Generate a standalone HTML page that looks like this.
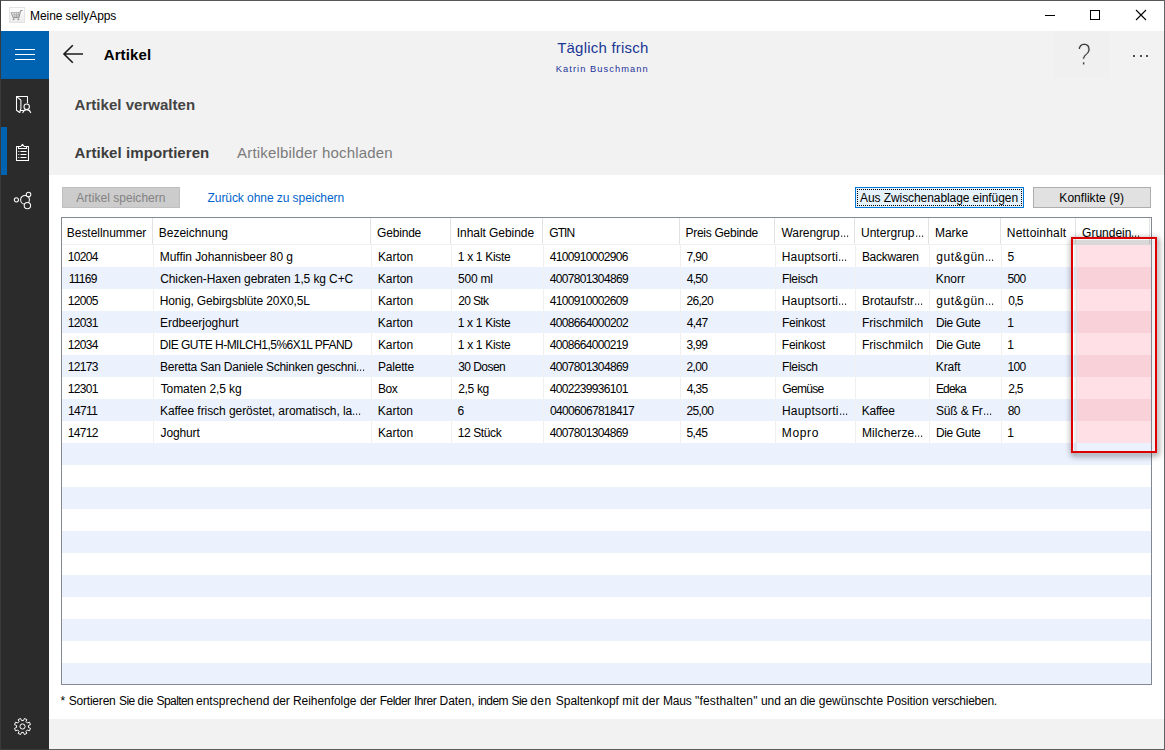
<!DOCTYPE html>
<html lang="de"><head><meta charset="utf-8"><title>Meine sellyApps</title>
<style>
html,body{margin:0;padding:0}
body{width:1165px;height:750px;overflow:hidden;position:relative;background:#fff;font-family:"Liberation Sans",sans-serif;font-size:12px;color:#000}
.a{position:absolute;white-space:nowrap}
.win{left:0;top:0;width:1163px;height:748px;border-style:solid;border-width:1px;border-color:#585858 #626262 #5e5e5e #3a3a3a;box-sizing:content-box}
.tbar{left:1px;top:1px;width:1163px;height:30px;background:#fff}
.side{left:1px;top:31px;width:48px;height:718px;background:#2b2b2b}
.ham{left:1px;top:31px;width:48px;height:48px;background:#0063b1}
.hl{left:15px;width:20px;height:1px;background:#fff}
.sel{left:1px;top:127px;width:6px;height:48px;background:#0063b1}
.head{left:49px;top:31px;width:1115px;height:144px;background:#f2f2f2}
.foot{left:49px;top:719px;width:1115px;height:30px;background:#f2f2f2}
.t15b{font-size:15px;font-weight:bold;line-height:20px}
.grid{left:61px;top:217px;width:1089px;height:466px;border:1px solid #828790;background:#fff}
.stripe{left:62px;width:1089px;height:22px;background:#ebf1fd}
.hs{top:218px;width:1px;height:26px;background:#e2e2e2}
.rs{top:245px;width:1px;height:198px;background:#f0f0f0}
.hc{top:220px;height:26px;line-height:26px}
.c{height:22px;line-height:24px}
.pink{left:1077px;width:74px;height:22px}
.dot{top:55.4px;width:2px;height:2px;border-radius:50%;background:#1a1a1a}
.el{display:inline-block;transform:scaleX(.78);transform-origin:0 50%;letter-spacing:0}
.btn{box-sizing:border-box;height:21px;line-height:21px;text-align:center}
</style></head><body>
<div class="a win"></div>
<div class="a tbar"></div>
<div class="a" style="left:0;top:749px;width:49px;height:1px;background:#3a3a3a"></div>
<div class="a side"></div>
<div class="a ham"></div>
<div class="a hl" style="top:49px"></div><div class="a hl" style="top:54px"></div><div class="a hl" style="top:59px"></div>
<div class="a sel"></div>
<div class="a head"></div>
<div class="a foot"></div>
<div class="a" style="left:9px;top:7px;width:14px;height:14px;border:1px solid #e3e3e3;background:linear-gradient(#fdfdfd,#ececec)"></div>
<svg class="a" style="left:9px;top:7px" width="16" height="16" viewBox="0 0 16 16"><g fill="none" stroke="#8d8d8d" stroke-width="1"><path d="M2.2 5.2 L4 10.6 H10 L11.6 3.6 H13.6"/><path d="M3 5.5h8M3.6 7.3h7M4.2 9h6" stroke="#aaa" stroke-width=".8"/><path d="M5.2 5.3l.9 5M7.4 5.3l.2 5M9.6 5.3l-.6 5" stroke="#a5a5a5" stroke-width=".8"/></g><circle cx="4.6" cy="12.3" r="1" fill="#9a9a9a"/><circle cx="9.4" cy="12.3" r="1" fill="#9a9a9a"/></svg>
<div class="a" id="t_title" style="left:30px;top:8px;font-size:12px;line-height:16px;letter-spacing:-0.075px;margin-left:0.03px">Meine sellyApps</div>
<div class="a" style="left:1045px;top:15px;width:10px;height:1px;background:#000"></div>
<div class="a" style="left:1090px;top:10px;width:8px;height:8px;border:1px solid #000"></div>
<svg class="a" style="left:1135px;top:9px" width="12" height="12" viewBox="0 0 12 12"><path d="M1 1L11 11M11 1L1 11" stroke="#000" stroke-width="1.1" fill="none"/></svg>
<svg class="a" style="left:13px;top:93px" width="22" height="22" viewBox="0 0 22 22"><g fill="none" stroke="#fff" stroke-width="1.05" stroke-linejoin="round" stroke-linecap="round"><path d="M14.5 9.8V3.5H3.5V17.3L6.7 19.5"/><path d="M3.5 3.5L7.9 7.2V15.6L6.7 19.5"/><path d="M7.2 17.5H10.4"/><circle cx="13.7" cy="13.7" r="2.7"/><path d="M9.8 19.6C10.4 17.6 11.9 16.6 13.7 16.6C15.5 16.6 17 17.6 17.7 19.6"/></g></svg>
<svg class="a" style="left:13px;top:141px" width="22" height="22" viewBox="0 0 22 22"><g fill="none" stroke="#fff" stroke-width="1.05" stroke-linejoin="round"><path d="M6 5.5H3.5V19.5H15.5V5.5H13"/><path d="M5.5 7.5V5.5H7.8L9.5 3.4L11.2 5.5H13.5V7.5Z"/><path d="M7.5 10.5H13.5M7.5 13.5H13.5M7.5 16.5H13.5" stroke-width="1.2"/><path d="M5.3 10.5H6.3M5.3 13.5H6.3M5.3 16.5H6.3" stroke-width="1.2"/></g></svg>
<svg class="a" style="left:12px;top:188px" width="24" height="24" viewBox="0 0 24 24"><g fill="#2b2b2b" stroke="#fff" stroke-width="1.05"><circle cx="13" cy="11.8" r="4.4"/><circle cx="4.4" cy="11.8" r="2.1"/><circle cx="16.5" cy="6.5" r="2.3"/><circle cx="15.4" cy="17.6" r="3.2"/></g></svg>
<svg class="a" style="left:11px;top:715px" width="24" height="24" viewBox="0 0 24 24"><g fill="none" stroke="#fff" stroke-width="1" stroke-linejoin="round"><path d="M13.35 3.51L15.84 4.54L14.99 6.62L16.38 8.01L18.46 7.16L19.49 9.65L17.42 10.51L17.42 12.49L19.49 13.35L18.46 15.84L16.38 14.99L14.99 16.38L15.84 18.46L13.35 19.49L12.49 17.42L10.51 17.42L9.65 19.49L7.16 18.46L8.01 16.38L6.62 14.99L4.54 15.84L3.51 13.35L5.58 12.49L5.58 10.51L3.51 9.65L4.54 7.16L6.62 8.01L8.01 6.62L7.16 4.54L9.65 3.51L10.51 5.58L12.49 5.58Z"/><circle cx="11.5" cy="11.5" r="2.6"/></g></svg>
<svg class="a" style="left:60px;top:42px" width="26" height="24" viewBox="0 0 26 24"><path d="M23 12H4M12.8 3.2L4 12L12.8 20.8" fill="none" stroke="#1c1c1c" stroke-width="1.6"/></svg>
<div class="a t15b" id="t_art" style="left:103.5px;top:45px;color:#000;letter-spacing:0.133px;margin-left:0.18px">Artikel</div>
<div class="a t15b" id="t_verw" style="left:74.5px;top:95px;color:#444;letter-spacing:0.033px;margin-left:0.06px">Artikel verwalten</div>
<div class="a t15b" id="t_imp" style="left:74.5px;top:143px;color:#3d3d3d;letter-spacing:0.074px;margin-left:0.09px">Artikel importieren</div>
<div class="a" id="t_bild" style="left:236.5px;top:143px;font-size:15px;line-height:20px;color:#7b7b7b;letter-spacing:0.175px;margin-left:0.55px">Artikelbilder hochladen</div>
<div class="a" id="t_tag" style="left:556px;top:37.6px;font-size:15px;line-height:20px;color:#1a3795;letter-spacing:0.212px;margin-left:1.20px">Täglich frisch</div>
<div class="a" id="t_kat" style="left:556px;top:62px;font-size:9.3px;line-height:14px;color:#24339a;letter-spacing:1.052px;margin-left:-0.20px">Katrin Buschmann</div>
<div class="a" style="left:1054px;top:31px;width:55px;height:48px;background:#f0f0f0"></div>
<div class="a" id="t_q" style="left:1053.5px;top:38px;width:60px;text-align:center;font-size:30.5px;line-height:32px;color:#3c3c3c;-webkit-text-stroke:0.95px #f0f0f0;transform:scaleX(.83)">?</div>
<div class="a dot" style="left:1133.1px"></div><div class="a dot" style="left:1139.5px"></div><div class="a dot" style="left:1146px"></div>
<div class="a btn" id="b_save" style="left:62px;top:187px;width:118px;background:#ccc;border:1px solid #bfbfbf;color:#838383"><span id="s_save" style="letter-spacing:0.036px;margin-left:-0.16px">Artikel speichern</span></div>
<div class="a" id="t_zur" style="left:207.5px;top:190px;line-height:16px;color:#0066cc;letter-spacing:-0.062px;margin-left:-0.00px">Zurück ohne zu speichern</div>
<div class="a btn" id="b_aus" style="left:855px;top:187px;width:169px;background:#e5f1fb;border:1px solid #0078d7"><span id="s_aus" style="letter-spacing:-0.082px;margin-left:-0.95px">Aus Zwischenablage einfügen</span></div>
<div class="a" style="left:857px;top:189px;width:163px;height:15px;border:1px dotted #000"></div>
<div class="a btn" id="b_konf" style="left:1033px;top:187px;width:118px;background:#e1e1e1;border:1px solid #adadad"><span id="s_konf" style="letter-spacing:0.044px;margin-left:-0.73px">Konflikte (9)</span></div>
<div class="a grid"></div>
<div class="a stripe" style="top:267px;height:22px"></div>
<div class="a stripe" style="top:311px;height:22px"></div>
<div class="a stripe" style="top:355px;height:22px"></div>
<div class="a stripe" style="top:399px;height:22px"></div>
<div class="a stripe" style="top:443px;height:22px"></div>
<div class="a stripe" style="top:487px;height:22px"></div>
<div class="a stripe" style="top:531px;height:22px"></div>
<div class="a stripe" style="top:575px;height:22px"></div>
<div class="a stripe" style="top:619px;height:22px"></div>
<div class="a stripe" style="top:663px;height:21px"></div>
<div class="a" style="left:62px;top:244px;width:1089px;height:1px;background:#f0f0f0"></div>
<div class="a hs" style="left:152px"></div><div class="a rs" style="left:153px"></div>
<div class="a hs" style="left:370px"></div><div class="a rs" style="left:371px"></div>
<div class="a hs" style="left:450px"></div><div class="a rs" style="left:451px"></div>
<div class="a hs" style="left:542px"></div><div class="a rs" style="left:543px"></div>
<div class="a hs" style="left:679px"></div><div class="a rs" style="left:680px"></div>
<div class="a hs" style="left:774px"></div><div class="a rs" style="left:775px"></div>
<div class="a hs" style="left:854px"></div><div class="a rs" style="left:855px"></div>
<div class="a hs" style="left:928px"></div><div class="a rs" style="left:929px"></div>
<div class="a hs" style="left:1000px"></div><div class="a rs" style="left:1001px"></div>
<div class="a hs" style="left:1075px"></div><div class="a rs" style="left:1076px"></div>
<div class="a hs" style="left:1149px"></div>
<div class="a hc" id="h0" style="left:66.5px;letter-spacing:-0.042px;margin-left:0.32px">Bestellnummer</div>
<div class="a hc" id="h1" style="left:158.5px;letter-spacing:-0.020px;margin-left:0.32px">Bezeichnung</div>
<div class="a hc" id="h2" style="left:376.5px;letter-spacing:-0.201px;margin-left:0.61px">Gebinde</div>
<div class="a hc" id="h3" style="left:456.5px;letter-spacing:-0.052px;margin-left:0.26px">Inhalt Gebinde</div>
<div class="a hc" id="h4" style="left:548.5px;letter-spacing:-0.900px;margin-left:0.75px">GTIN</div>
<div class="a hc" id="h5" style="left:685.5px;letter-spacing:-0.273px;margin-left:0.00px">Preis Gebinde</div>
<div class="a hc" id="h6" style="left:780.5px;letter-spacing:-0.083px;margin-left:1.00px">Warengrup<span class="el">…</span></div>
<div class="a hc" id="h7" style="left:860.5px;letter-spacing:0.026px;margin-left:0.46px">Untergrup<span class="el">…</span></div>
<div class="a hc" id="h8" style="left:934.5px;letter-spacing:0.004px;margin-left:0.38px">Marke</div>
<div class="a hc" id="h9" style="left:1006.5px;letter-spacing:0.202px;margin-left:0.32px">Nettoinhalt</div>
<div class="a hc" id="h10" style="left:1081.5px;letter-spacing:-0.004px;margin-left:0.61px">Grundein<span class="el">…</span></div>
<div class="a" id="redshadow" style="left:1051px;top:217px;width:126px;height:256px;clip-path:polygon(evenodd,0 0,126px 0,126px 256px,0 256px,0 0,22px 22px,22px 236px,104px 236px,104px 22px,22px 22px)"><div class="a" style="left:20px;top:20px;width:82px;height:212px;border:2px solid #000;filter:drop-shadow(1.8px 2.8px 3px rgba(0,0,0,.85))"></div></div>
<div class="a" id="band_t" style="left:1073px;top:239px;width:78px;height:6px;background:linear-gradient(to bottom,rgba(0,0,0,.03) 0,rgba(0,0,0,.03) 1px,rgba(0,0,0,.15) 1px,rgba(0,0,0,.15) 5px,rgba(0,0,0,.10) 5px)"></div>
<div class="a" id="band_tr" style="left:1152px;top:240px;width:3px;height:5px;background:rgba(0,0,0,.06)"></div>
<div class="a" id="band_l" style="left:1074px;top:245px;width:3px;height:206px;background:rgba(0,0,0,.06)"></div>
<div class="a" id="band_r" style="left:1152px;top:245px;width:3px;height:206px;background:rgba(0,0,0,.05)"></div>
<div class="a c" id="r0c0" style="left:67.5px;top:245px;letter-spacing:-0.670px;margin-left:0.17px">10204</div>
<div class="a c" id="r0c1" style="left:159.5px;top:245px;letter-spacing:-0.061px;margin-left:0.32px">Muffin Johannisbeer 80 g</div>
<div class="a c" id="r0c2" style="left:377.5px;top:245px;letter-spacing:-0.021px;margin-left:0.38px">Karton</div>
<div class="a c" id="r0c3" style="left:457.5px;top:245px;letter-spacing:-0.321px;margin-left:0.32px">1 x 1 Kiste</div>
<div class="a c" id="r0c4" style="left:549.5px;top:245px;letter-spacing:-0.670px;margin-left:0.30px">4100910002906</div>
<div class="a c" id="r0c5" style="left:686.5px;top:245px;letter-spacing:-0.670px;margin-left:0.05px">7,90</div>
<div class="a c" id="r0c6" style="left:781.5px;top:245px;letter-spacing:0.145px;margin-left:0.32px">Hauptsorti<span class="el">…</span></div>
<div class="a c" id="r0c7" style="left:861.5px;top:245px;letter-spacing:-0.288px;margin-left:0.38px">Backwaren</div>
<div class="a c" id="r0c8" style="left:935.5px;top:245px;letter-spacing:0.551px;margin-left:0.79px">gut&amp;gün<span class="el">…</span></div>
<div class="a c" id="r0c9" style="left:1007.5px;top:245px;letter-spacing:-0.670px;margin-left:0.00px">5</div>
<div class="a pink" style="top:245px;background:#ffe0e6"></div>
<div class="a c" id="r1c0" style="left:67.5px;top:267px;letter-spacing:-0.670px;margin-left:1.13px">11169</div>
<div class="a c" id="r1c1" style="left:159.5px;top:267px;letter-spacing:-0.109px;margin-left:0.75px">Chicken-Haxen gebraten 1,5 kg C+C</div>
<div class="a c" id="r1c2" style="left:377.5px;top:267px;letter-spacing:-0.046px;margin-left:0.35px">Karton</div>
<div class="a c" id="r1c3" style="left:457.5px;top:267px;letter-spacing:-0.193px;margin-left:0.48px">500 ml</div>
<div class="a c" id="r1c4" style="left:549.5px;top:267px;letter-spacing:-0.670px;margin-left:0.35px">4007801304869</div>
<div class="a c" id="r1c5" style="left:686.5px;top:267px;letter-spacing:-0.670px;margin-left:0.21px">4,50</div>
<div class="a c" id="r1c6" style="left:781.5px;top:267px;letter-spacing:-0.340px;margin-left:0.50px">Fleisch</div>
<div class="a c" id="r1c8" style="left:935.5px;top:267px;letter-spacing:-0.075px;margin-left:0.35px">Knorr</div>
<div class="a c" id="r1c9" style="left:1007.5px;top:267px;letter-spacing:-0.670px;margin-left:0.00px">500</div>
<div class="a pink" style="top:267px;background:#f8d1d9"></div>
<div class="a c" id="r2c0" style="left:67.5px;top:289px;letter-spacing:-0.670px;margin-left:0.18px">12005</div>
<div class="a c" id="r2c1" style="left:159.5px;top:289px;letter-spacing:-0.152px;margin-left:0.32px">Honig, Gebirgsblüte 20X0,5L</div>
<div class="a c" id="r2c2" style="left:377.5px;top:289px;letter-spacing:-0.021px;margin-left:0.38px">Karton</div>
<div class="a c" id="r2c3" style="left:457.5px;top:289px;letter-spacing:-0.660px;margin-left:0.77px">20 Stk</div>
<div class="a c" id="r2c4" style="left:549.5px;top:289px;letter-spacing:-0.670px;margin-left:0.30px">4100910002609</div>
<div class="a c" id="r2c5" style="left:686.5px;top:289px;letter-spacing:-0.670px;margin-left:-0.13px">26,20</div>
<div class="a c" id="r2c6" style="left:781.5px;top:289px;letter-spacing:0.145px;margin-left:0.32px">Hauptsorti<span class="el">…</span></div>
<div class="a c" id="r2c7" style="left:861.5px;top:289px;letter-spacing:0.010px;margin-left:0.38px">Brotaufstr<span class="el">…</span></div>
<div class="a c" id="r2c8" style="left:935.5px;top:289px;letter-spacing:0.551px;margin-left:0.79px">gut&amp;gün<span class="el">…</span></div>
<div class="a c" id="r2c9" style="left:1007.5px;top:289px;letter-spacing:-0.670px;margin-left:0.67px">0,5</div>
<div class="a pink" style="top:289px;background:#ffe0e6"></div>
<div class="a c" id="r3c0" style="left:67.5px;top:311px;letter-spacing:-0.670px;margin-left:0.18px">12031</div>
<div class="a c" id="r3c1" style="left:159.5px;top:311px;letter-spacing:-0.057px;margin-left:0.50px">Erdbeerjoghurt</div>
<div class="a c" id="r3c2" style="left:377.5px;top:311px;letter-spacing:-0.046px;margin-left:0.35px">Karton</div>
<div class="a c" id="r3c3" style="left:457.5px;top:311px;letter-spacing:-0.303px;margin-left:0.23px">1 x 1 Kiste</div>
<div class="a c" id="r3c4" style="left:549.5px;top:311px;letter-spacing:-0.670px;margin-left:0.35px">4008664000202</div>
<div class="a c" id="r3c5" style="left:686.5px;top:311px;letter-spacing:-0.670px;margin-left:0.27px">4,47</div>
<div class="a c" id="r3c6" style="left:781.5px;top:311px;letter-spacing:-0.281px;margin-left:0.50px">Feinkost</div>
<div class="a c" id="r3c7" style="left:861.5px;top:311px;letter-spacing:0.056px;margin-left:0.38px">Frischmilch</div>
<div class="a c" id="r3c8" style="left:935.5px;top:311px;letter-spacing:-0.361px;margin-left:0.38px">Die Gute</div>
<div class="a c" id="r3c9" style="left:1007.5px;top:311px;letter-spacing:-0.670px;margin-left:-0.29px">1</div>
<div class="a pink" style="top:311px;background:#f8d1d9"></div>
<div class="a c" id="r4c0" style="left:67.5px;top:333px;letter-spacing:-0.670px;margin-left:0.17px">12034</div>
<div class="a c" id="r4c1" style="left:159.5px;top:333px;letter-spacing:-0.531px;margin-left:0.32px">DIE GUTE H-MILCH1,5%6X1L PFAND</div>
<div class="a c" id="r4c2" style="left:377.5px;top:333px;letter-spacing:-0.021px;margin-left:0.38px">Karton</div>
<div class="a c" id="r4c3" style="left:457.5px;top:333px;letter-spacing:-0.321px;margin-left:0.32px">1 x 1 Kiste</div>
<div class="a c" id="r4c4" style="left:549.5px;top:333px;letter-spacing:-0.670px;margin-left:0.30px">4008664000219</div>
<div class="a c" id="r4c5" style="left:686.5px;top:333px;letter-spacing:-0.670px;margin-left:0.12px">3,99</div>
<div class="a c" id="r4c6" style="left:781.5px;top:333px;letter-spacing:-0.258px;margin-left:0.32px">Feinkost</div>
<div class="a c" id="r4c7" style="left:861.5px;top:333px;letter-spacing:0.054px;margin-left:0.38px">Frischmilch</div>
<div class="a c" id="r4c8" style="left:935.5px;top:333px;letter-spacing:-0.349px;margin-left:0.38px">Die Gute</div>
<div class="a c" id="r4c9" style="left:1007.5px;top:333px;letter-spacing:-0.670px;margin-left:-0.38px">1</div>
<div class="a pink" style="top:333px;background:#ffe0e6"></div>
<div class="a c" id="r5c0" style="left:67.5px;top:355px;letter-spacing:-0.670px;margin-left:0.18px">12173</div>
<div class="a c" id="r5c1" style="left:159.5px;top:355px;letter-spacing:-0.241px;margin-left:0.50px">Beretta San Daniele Schinken geschni<span class="el">…</span></div>
<div class="a c" id="r5c2" style="left:377.5px;top:355px;letter-spacing:-0.175px;margin-left:0.38px">Palette</div>
<div class="a c" id="r5c3" style="left:457.5px;top:355px;letter-spacing:-0.548px;margin-left:0.70px">30 Dosen</div>
<div class="a c" id="r5c4" style="left:549.5px;top:355px;letter-spacing:-0.670px;margin-left:0.35px">4007801304869</div>
<div class="a c" id="r5c5" style="left:686.5px;top:355px;letter-spacing:-0.670px;margin-left:0.00px">2,00</div>
<div class="a c" id="r5c6" style="left:781.5px;top:355px;letter-spacing:-0.340px;margin-left:0.50px">Fleisch</div>
<div class="a c" id="r5c8" style="left:935.5px;top:355px;letter-spacing:-0.135px;margin-left:0.35px">Kraft</div>
<div class="a c" id="r5c9" style="left:1007.5px;top:355px;letter-spacing:-0.670px;margin-left:0.00px">100</div>
<div class="a pink" style="top:355px;background:#f8d1d9"></div>
<div class="a c" id="r6c0" style="left:67.5px;top:377px;letter-spacing:-0.670px;margin-left:0.18px">12301</div>
<div class="a c" id="r6c1" style="left:159.5px;top:377px;letter-spacing:-0.079px;margin-left:1.16px">Tomaten 2,5 kg</div>
<div class="a c" id="r6c2" style="left:377.5px;top:377px;letter-spacing:-0.450px;margin-left:0.38px">Box</div>
<div class="a c" id="r6c3" style="left:457.5px;top:377px;letter-spacing:-0.336px;margin-left:0.77px">2,5 kg</div>
<div class="a c" id="r6c4" style="left:549.5px;top:377px;letter-spacing:-0.670px;margin-left:0.29px">4002239936101</div>
<div class="a c" id="r6c5" style="left:686.5px;top:377px;letter-spacing:-0.670px;margin-left:0.23px">4,35</div>
<div class="a c" id="r6c6" style="left:781.5px;top:377px;letter-spacing:-0.667px;margin-left:0.75px">Gemüse</div>
<div class="a c" id="r6c8" style="left:935.5px;top:377px;letter-spacing:-0.808px;margin-left:0.38px">Edeka</div>
<div class="a c" id="r6c9" style="left:1007.5px;top:377px;letter-spacing:-0.670px;margin-left:0.63px">2,5</div>
<div class="a pink" style="top:377px;background:#ffe0e6"></div>
<div class="a c" id="r7c0" style="left:67.5px;top:399px;letter-spacing:-0.670px;margin-left:0.59px">14711</div>
<div class="a c" id="r7c1" style="left:159.5px;top:399px;letter-spacing:-0.060px;margin-left:0.47px">Kaffee frisch geröstet, aromatisch, la<span class="el">…</span></div>
<div class="a c" id="r7c2" style="left:377.5px;top:399px;letter-spacing:-0.046px;margin-left:0.35px">Karton</div>
<div class="a c" id="r7c3" style="left:457.5px;top:399px;letter-spacing:-0.670px;margin-left:0.06px">6</div>
<div class="a c" id="r7c4" style="left:549.5px;top:399px;letter-spacing:-0.670px;margin-left:0.39px">04006067818417</div>
<div class="a c" id="r7c5" style="left:686.5px;top:399px;letter-spacing:-0.670px;margin-left:-0.02px">25,00</div>
<div class="a c" id="r7c6" style="left:781.5px;top:399px;letter-spacing:0.188px;margin-left:0.50px">Hauptsorti<span class="el">…</span></div>
<div class="a c" id="r7c7" style="left:861.5px;top:399px;letter-spacing:-0.282px;margin-left:0.35px">Kaffee</div>
<div class="a c" id="r7c8" style="left:935.5px;top:399px;letter-spacing:-0.172px;margin-left:0.51px">Süß &amp; Fr<span class="el">…</span></div>
<div class="a c" id="r7c9" style="left:1007.5px;top:399px;letter-spacing:-0.670px;margin-left:0.24px">80</div>
<div class="a pink" style="top:399px;background:#f8d1d9"></div>
<div class="a c" id="r8c0" style="left:67.5px;top:421px;letter-spacing:-0.670px;margin-left:0.18px">14712</div>
<div class="a c" id="r8c1" style="left:159.5px;top:421px;letter-spacing:-0.124px;margin-left:1.04px">Joghurt</div>
<div class="a c" id="r8c2" style="left:377.5px;top:421px;letter-spacing:-0.021px;margin-left:0.38px">Karton</div>
<div class="a c" id="r8c3" style="left:457.5px;top:421px;letter-spacing:-0.408px;margin-left:0.32px">12 Stück</div>
<div class="a c" id="r8c4" style="left:549.5px;top:421px;letter-spacing:-0.670px;margin-left:0.30px">4007801304869</div>
<div class="a c" id="r8c5" style="left:686.5px;top:421px;letter-spacing:-0.670px;margin-left:0.02px">5,45</div>
<div class="a c" id="r8c6" style="left:781.5px;top:421px;letter-spacing:0.644px;margin-left:0.32px">Mopro</div>
<div class="a c" id="r8c7" style="left:861.5px;top:421px;letter-spacing:0.126px;margin-left:0.38px">Milcherze<span class="el">…</span></div>
<div class="a c" id="r8c8" style="left:935.5px;top:421px;letter-spacing:-0.349px;margin-left:0.38px">Die Gute</div>
<div class="a c" id="r8c9" style="left:1007.5px;top:421px;letter-spacing:-0.670px;margin-left:-0.38px">1</div>
<div class="a pink" style="top:421px;background:#ffe0e6"></div>
<div class="a" id="t_foot" style="left:0;top:693px;line-height:16px;width:1100px;height:16px"><span class="a fw" style="left:60.4px;letter-spacing:0.230px">*</span> <span class="a fw" style="left:68.7px;letter-spacing:-0.199px">Sortieren</span> <span class="a fw" style="left:119.0px;letter-spacing:-0.600px">Sie</span> <span class="a fw" style="left:137.6px;letter-spacing:-0.137px">die</span> <span class="a fw" style="left:156.6px;letter-spacing:-0.600px">Spalten</span> <span class="a fw" style="left:195.9px;letter-spacing:0.065px">entsprechend</span> <span class="a fw" style="left:272.8px;letter-spacing:-0.215px">der</span> <span class="a fw" style="left:292.9px;letter-spacing:-0.040px">Reihenfolge</span> <span class="a fw" style="left:359.9px;letter-spacing:-0.315px">der</span> <span class="a fw" style="left:379.7px;letter-spacing:-0.519px">Felder</span> <span class="a fw" style="left:414.0px;letter-spacing:-0.495px">Ihrer</span> <span class="a fw" style="left:439.6px;letter-spacing:-0.059px">Daten,</span> <span class="a fw" style="left:478.0px;letter-spacing:-0.517px">indem</span> <span class="a fw" style="left:511.5px;letter-spacing:-0.600px">Sie</span> <span class="a fw" style="left:530.2px;letter-spacing:0.500px">den</span> <span class="a fw" style="left:555.8px;letter-spacing:-0.025px">Spaltenkopf</span> <span class="a fw" style="left:622.3px;letter-spacing:0.101px">mit</span> <span class="a fw" style="left:642.0px;letter-spacing:0.052px">der</span> <span class="a fw" style="left:662.9px;letter-spacing:-0.136px">Maus</span> <span class="a fw" style="left:695.1px;letter-spacing:0.162px">"festhalten"</span> <span class="a fw" style="left:761.0px;letter-spacing:-0.107px">und</span> <span class="a fw" style="left:784.1px;letter-spacing:-0.423px">an</span> <span class="a fw" style="left:800.0px;letter-spacing:-0.238px">die</span> <span class="a fw" style="left:818.7px;letter-spacing:0.036px">gewünschte</span> <span class="a fw" style="left:886.5px;letter-spacing:-0.086px">Position</span> <span class="a fw" style="left:931.9px;letter-spacing:-0.253px">verschieben.</span></div>
<div class="a" id="redrect" style="left:1071px;top:237px;width:82px;height:212px;border:2px solid #dc0000"></div>
</body></html>
